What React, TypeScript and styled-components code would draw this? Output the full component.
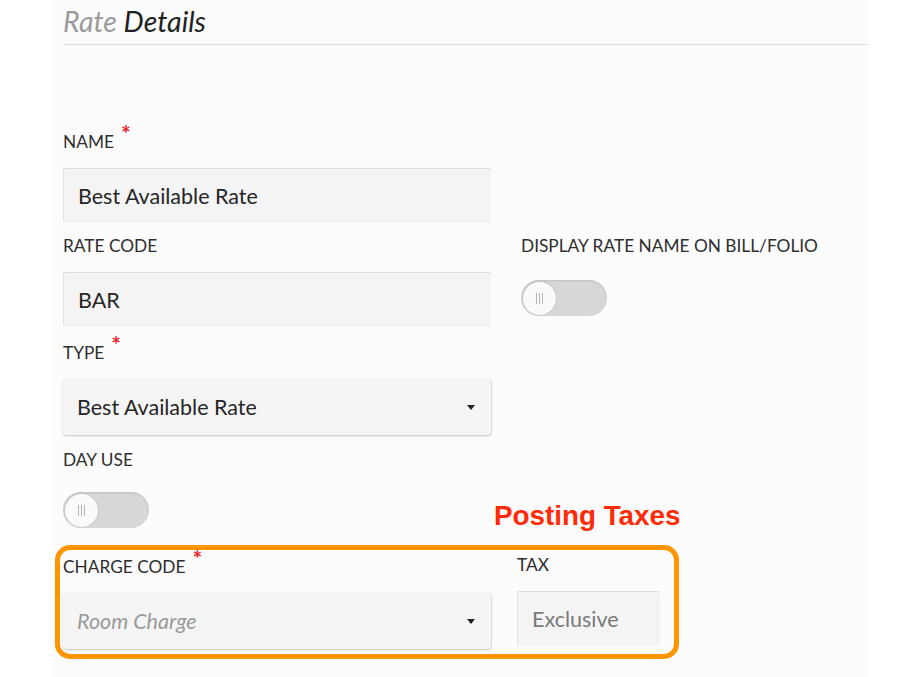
import React from "react";
import styled, { createGlobalStyle } from "styled-components";

const Global = createGlobalStyle`
  html, body { margin: 0; padding: 0; background: #ffffff; }
  body { font-family: "Lato", "Noto Sans", sans-serif; color: #333; }
  * { box-sizing: border-box; }
`;

const Page = styled.div`
  position: relative;
  width: 920px;
  height: 677px;
  overflow: hidden;
  background: #ffffff;
`;

const Panel = styled.div`
  margin-left: 52px;
  width: 816px;
  min-height: 677px;
  background: #fcfcfc;
  padding-left: 11px;
`;

const Header = styled.div`
  height: 45px;
  border-bottom: 1px solid #dcdcdc;
  display: flex;
  align-items: flex-end;
  padding-bottom: 7px;
`;

const Title = styled.h2`
  margin: 0;
  font-family: "Lato", sans-serif;
  font-style: italic;
  font-weight: 400;
  font-size: 28.5px;
  line-height: 32px;
  color: #222;
  span { color: #9a9a9a; }
`;

const Form = styled.div`
  padding-top: 87px;
  display: grid;
  grid-template-columns: 428px 1fr;
  column-gap: 30px;
  width: 760px;
`;

const Field = styled.div<{ $mt?: number; $w?: number }>`
  display: flex;
  flex-direction: column;
  margin-top: ${(p) => p.$mt ?? 0}px;
  ${(p) => (p.$w ? `width: ${p.$w}px;` : "")}
`;

const Label = styled.label<{ $mb?: number }>`
  font-size: 17.3px;
  line-height: 20px;
  height: 20px;
  color: #2e2e2e;
  text-transform: uppercase;
  margin-bottom: ${(p) => p.$mb ?? 16}px;
  white-space: nowrap;
`;

const Req = styled.span`
  color: #e8262b;
  font-size: 23px;
  font-weight: 700;
  line-height: 0;
  margin-left: 7px;
  position: relative;
  top: -6px;
`;

const Input = styled.div<{ $muted?: boolean; $w?: number }>`
  height: 55px;
  width: ${(p) => (p.$w ? `${p.$w}px` : "100%")};
  background: #f4f4f4;
  border-top: 1px solid #dedede;
  border-left: 1px solid #e3e3e3;
  border-radius: 2px;
  display: flex;
  align-items: center;
  padding-left: 14px;
  font-size: 21.5px;
  color: ${(p) => (p.$muted ? "#7a7a7a" : "#262626")};
`;

const Select = styled.div<{ $placeholder?: boolean }>`
  height: 56px;
  width: 100%;
  background: #f5f5f5;
  border-radius: 3px;
  box-shadow: 0 1px 2px rgba(0, 0, 0, 0.22), 1px 0 1px rgba(0, 0, 0, 0.08);
  display: flex;
  align-items: center;
  justify-content: space-between;
  padding: 0 16px 0 14px;
  font-size: 21.5px;
  color: ${(p) => (p.$placeholder ? "#9a9a9a" : "#262626")};
  font-style: ${(p) => (p.$placeholder ? "italic" : "normal")};
`;

const Caret = styled.span`
  width: 0;
  height: 0;
  border-left: 4px solid transparent;
  border-right: 4px solid transparent;
  border-top: 5px solid #222;
`;

const Toggle = styled.div`
  width: 86px;
  height: 36px;
  border-radius: 18px;
  background: #d7d7d7;
  box-shadow: inset 0 1px 2px rgba(0, 0, 0, 0.12);
  padding: 2px;
  display: flex;
  align-items: center;
`;

const Knob = styled.div`
  width: 33px;
  height: 33px;
  border-radius: 50%;
  background: #fafafa;
  box-shadow: 0 0 2px rgba(0, 0, 0, 0.2);
  display: flex;
  align-items: center;
  justify-content: center;
  gap: 2px;
  i {
    display: block;
    width: 1px;
    height: 11px;
    background: #b5b5b5;
  }
`;

const Spacer = styled.div``;

const Annotation = styled.div`
  position: absolute;
  left: 494px;
  top: 500px;
  font-family: "Liberation Sans", Arial, sans-serif;
  font-weight: 700;
  font-size: 27.8px;
  line-height: 32px;
  color: #ff2a06;
`;

const Highlight = styled.div`
  position: absolute;
  left: 55px;
  top: 545px;
  width: 624px;
  height: 114px;
  border: 5px solid #ff9500;
  border-radius: 15px;
  pointer-events: none;
`;

const BottomRow = styled.div`
  display: flex;
  gap: 26px;
  margin-top: 29px;
  width: 600px;
`;

const KnobLines = () => (
  <Knob>
    <i />
    <i />
    <i />
  </Knob>
);

export default function App() {
  return (
    <Page>
      <Global />
      <Panel>
        <Header>
          <Title>
            <span>Rate</span> Details
          </Title>
        </Header>
        <Form>
          <Field>
            <Label>
              Name<Req>*</Req>
            </Label>
            <Input>Best Available Rate</Input>
          </Field>
          <Spacer />
          <Field $mt={13}>
            <Label>Rate Code</Label>
            <Input>BAR</Input>
          </Field>
          <Field $mt={13}>
            <Label $mb={24}>Display Rate Name on Bill/Folio</Label>
            <Toggle>
              <KnobLines />
            </Toggle>
          </Field>
          <Field $mt={16}>
            <Label>
              Type<Req>*</Req>
            </Label>
            <Select>
              Best Available Rate
              <Caret />
            </Select>
          </Field>
          <Spacer />
          <Field $mt={15}>
            <Label $mb={22}>Day Use</Label>
            <Toggle>
              <KnobLines />
            </Toggle>
          </Field>
          <Spacer />
        </Form>
        <BottomRow>
          <Field $w={428}>
            <Label>
              Charge Code<Req>*</Req>
            </Label>
            <Select $placeholder>
              Room Charge
              <Caret />
            </Select>
          </Field>
          <Field $mt={-2}>
            <Label>Tax</Label>
            <Input $muted $w={143}>
              Exclusive
            </Input>
          </Field>
        </BottomRow>
      </Panel>
      <Annotation>Posting Taxes</Annotation>
      <Highlight />
    </Page>
  );
}
